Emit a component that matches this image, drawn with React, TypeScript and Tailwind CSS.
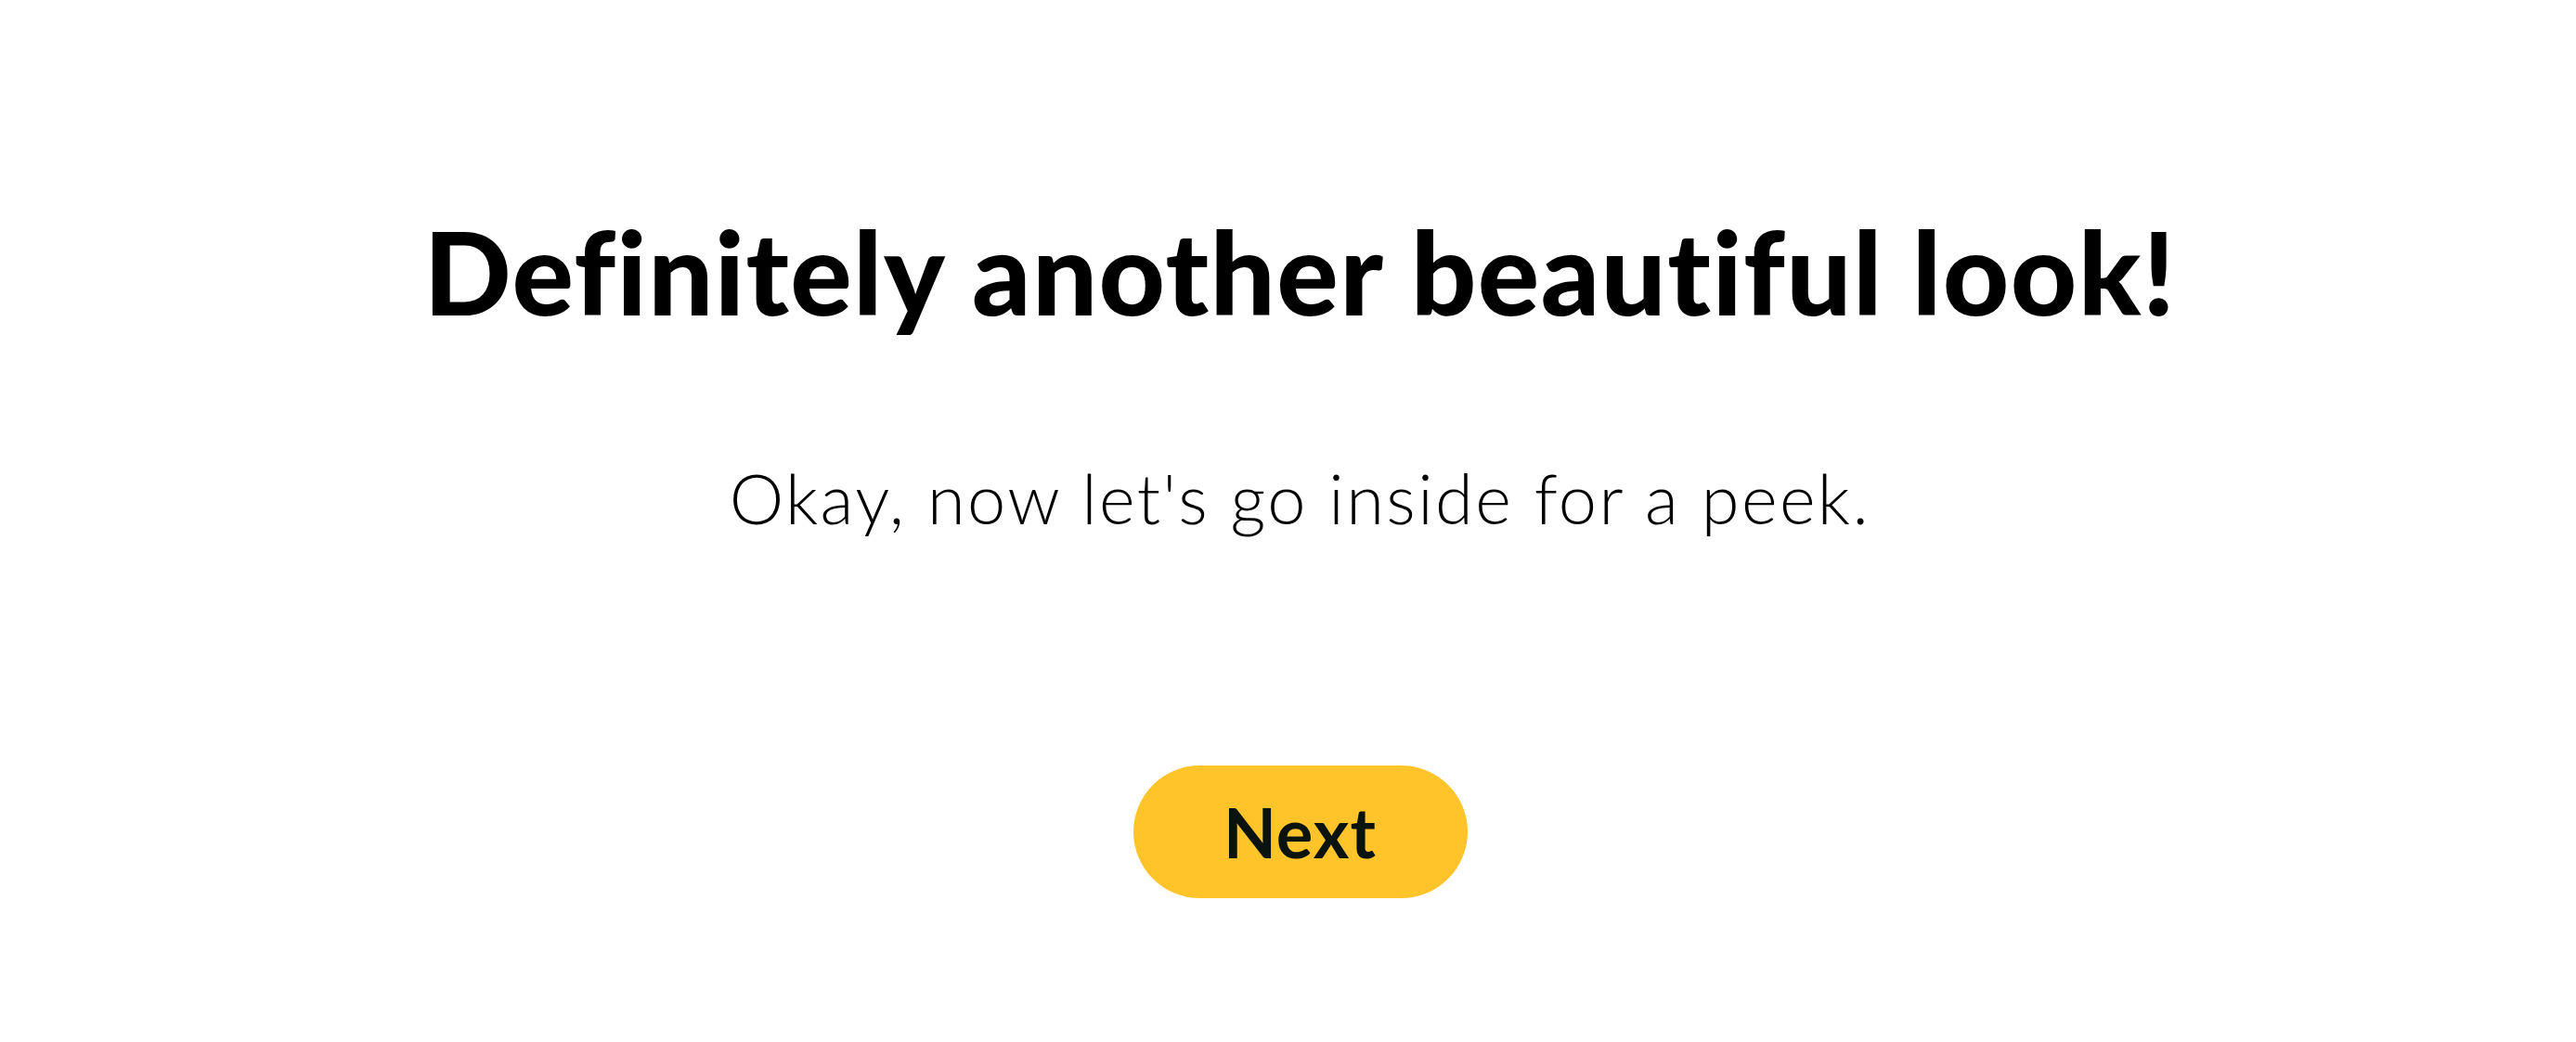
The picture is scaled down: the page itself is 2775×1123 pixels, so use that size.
export default function App() {
  return (
    <div className="min-h-[1123px] w-full bg-white flex flex-col items-center pt-[230px] pl-[26px] font-['Lato',sans-serif] text-black [font-variant-ligatures:none]">
      <h1 className="text-[124px] leading-none font-black tracking-[1.4px]">
        Definitely another beautiful look!
      </h1>
      <p className="mt-[146px] text-[74px] leading-none font-light tracking-[2.4px]">
        Okay, now let's go inside for a peek.
      </p>
      <button className="mt-[251px] w-[360px] h-[143px] rounded-full bg-[#ffc42a] flex items-center justify-center text-[74px] font-bold text-[#0b130f] leading-none tracking-[1px]">
        Next
      </button>
    </div>
  );
}
